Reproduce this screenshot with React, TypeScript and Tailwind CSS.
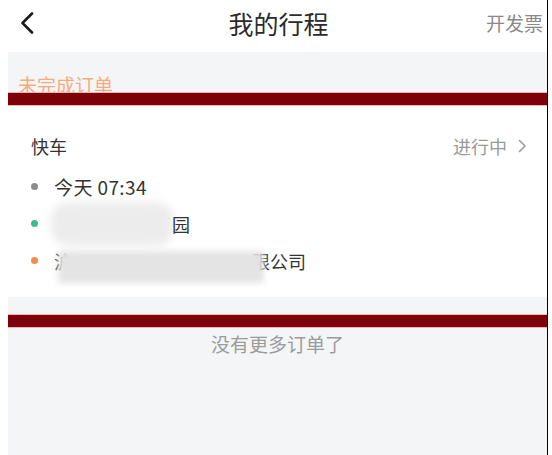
import React from 'react';

const font = { fontFamily: '"Noto Sans CJK SC", "Noto Sans", sans-serif' };

function Bar() {
  return (
    <div className="relative h-[14px] border-y border-[#f2b4b0] bg-[#7e0009]" />
  );
}

function Dot({ color }: { color: string }) {
  return <span className={`h-[7px] w-[7px] shrink-0 rounded-full ${color}`} />;
}

export default function App() {
  return (
    <div className="flex h-[455px] w-[552px] overflow-hidden bg-white" style={font}>
      <div className="flex w-[547px] flex-col">
        {/* Header */}
        <div className="grid h-[52px] grid-cols-[1fr_auto_1fr] items-start bg-white pl-[14px] pr-[4px]">
          <div className="pt-[12px] pl-[6px]">
            <svg width="14" height="22" viewBox="0 0 14 22" fill="none">
              <polyline
                points="12,1.5 2.5,11 12,20.5"
                stroke="#1a1a1a"
                strokeWidth="2.6"
                strokeLinecap="round"
                strokeLinejoin="round"
              />
            </svg>
          </div>
          <h1 className="pt-[9px] text-[25px] leading-[28px] text-[#2b2b2b]">我的行程</h1>
          <div className="pt-[12px] text-right text-[19px] leading-[22px] text-[#8a8a8a]">
            开发票
          </div>
        </div>

        {/* Body */}
        <div className="ml-[8px] flex flex-1 flex-col bg-[#f4f5f7]">
          <div className="pt-[23px] pl-[10px] text-[19px] leading-[19px] text-[#f5ab7e]">
            未完成订单
          </div>
          <div className="-mt-[2px]">
            <Bar />
          </div>

          {/* Order card */}
          <div className="h-[191px] bg-white pt-[30px] pl-[23px] pr-[20px]">
            <div className="flex h-[20px] items-center justify-between">
              <span className="text-[18px] leading-[20px] text-[#333333]">快车</span>
              <span className="flex items-center gap-[11px] text-[18px] leading-[20px] text-[#9a9a9a]">
                进行中
                <svg width="9" height="14" viewBox="0 0 9 14" fill="none">
                  <polyline
                    points="1.5,1.5 7,7 1.5,12.5"
                    stroke="#9a9a9a"
                    strokeWidth="1.6"
                    strokeLinecap="round"
                    strokeLinejoin="round"
                  />
                </svg>
              </span>
            </div>

            <div className="mt-[12px] flex flex-col">
              <div className="flex h-[37px] items-center gap-[16px]">
                <Dot color="bg-[#8c8c8c]" />
                <span className="text-[19px] leading-[20px] tracking-[0.4px] text-[#333333]">今天 07:34</span>
              </div>
              <div className="flex h-[37px] items-center gap-[13px]">
                <Dot color="bg-[#3dba8c]" />
                <span className="flex items-center text-[18px] leading-[20px] text-[#333333]">
                  <span className="-my-[12px] h-[44px] w-[123px] rounded-[18px] bg-[#ececec] blur-[4px]" />
                  <span className="relative -ml-[2px]">园</span>
                </span>
              </div>
              <div className="flex h-[37px] items-center gap-[16px]">
                <Dot color="bg-[#f28c4a]" />
                <span className="flex items-center text-[18px] leading-[20px] text-[#333333]">
                  <span>沪</span>
                  <span className="relative -ml-[14px] mt-[6px] -mb-[6px] h-[32px] w-[206px] bg-[#e4e4e4] blur-[3px]" />
                  <span className="-ml-[12px]">限公司</span>
                </span>
              </div>
            </div>
          </div>

          <div className="h-[17px]" />
          <Bar />

          <div className="mt-[6px] text-center text-[19px] leading-[19px] text-[#9b9b9b]">
            没有更多订单了
          </div>
        </div>
      </div>
      <div className="w-[1px] bg-black" />
      <div className="flex-1 bg-white" />
    </div>
  );
}
